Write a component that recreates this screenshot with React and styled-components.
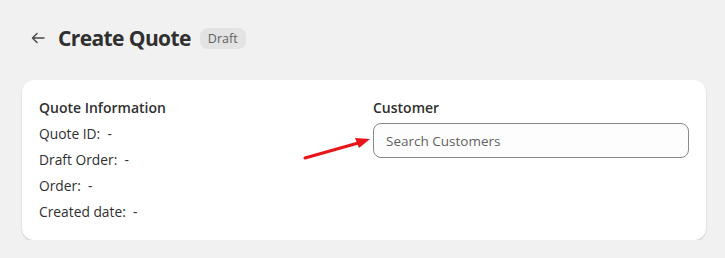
import React from 'react';
import styled, { createGlobalStyle } from 'styled-components';

const GlobalStyle = createGlobalStyle`
    body {
        margin: 0;
        background: #f1f1f1;
        font-family: "Open Sans", "Noto Sans", sans-serif;
        color: #303030;
    }
`;

const Page = styled.div`
    position: relative;
    padding: 24px 19px 0 22px;
`;

const Header = styled.div`
    display: flex;
    align-items: center;
    height: 28px;
    padding-left: 7px;
    margin-bottom: 28px;
`;

const BackButton = styled.button`
    display: flex;
    align-items: center;
    justify-content: center;
    width: 18px;
    height: 18px;
    padding: 0;
    margin-right: 11px;
    border: none;
    background: none;
    color: #4a4a4a;
    cursor: pointer;
`;

const Title = styled.h1`
    margin: 0 9px 0 0;
    font-size: 21px;
    font-weight: 700;
    letter-spacing: -0.6px;
    color: #303030;
`;

const Badge = styled.span`
    display: inline-flex;
    align-items: center;
    height: 21px;
    padding: 0 8px;
    border-radius: 8px;
    background: #e3e3e3;
    color: #616161;
    font-size: 12.5px;
`;

const Card = styled.div`
    display: grid;
    grid-template-columns: 1fr 1fr;
    gap: 18px;
    padding: 18px 17px 15px;
    background: #fff;
    border-radius: 12px;
    box-shadow: 0 1px 2px rgba(0, 0, 0, 0.18);
`;

const Column = styled.div`
    display: flex;
    flex-direction: column;
`;

const SectionTitle = styled.h2`
    margin: 0 0 ${(p) => p.$gap}px;
    font-size: 14px;
    line-height: 20px;
    font-weight: 600;
    color: #303030;
`;

const InfoRow = styled.div`
    font-size: 13.8px;
    line-height: 26px;
    color: #303030;
    white-space: pre;
`;

const SearchInput = styled.input`
    box-sizing: border-box;
    width: 100%;
    height: 35px;
    padding: 0 12px;
    border: 1px solid #8a8a8a;
    border-radius: 8px;
    background: #fdfdfd;
    font-family: inherit;
    font-size: 13.5px;
    color: #303030;
    outline: none;

    &::placeholder {
        color: #616161;
    }
`;

const Pointer = styled.svg`
    position: absolute;
    left: 300px;
    top: 131px;
    pointer-events: none;
`;

const info = [
    ['Quote ID:', '-'],
    ['Draft Order:', '-'],
    ['Order:', '-'],
    ['Created date:', '-'],
];

const App = () => {
    return (
        <>
            <GlobalStyle />
            <Page>
                <Header>
                    <BackButton aria-label="Back">
                        <svg width="16" height="16" viewBox="0 0 16 16" fill="none">
                            <path d="M14 8H2.5M7 3.5L2.5 8L7 12.5" stroke="currentColor" strokeWidth="1.5" strokeLinecap="round" strokeLinejoin="round" />
                        </svg>
                    </BackButton>
                    <Title>Create Quote</Title>
                    <Badge>Draft</Badge>
                </Header>
                <Card>
                    <Column>
                        <SectionTitle $gap={3}>Quote Information</SectionTitle>
                        {info.map(([label, value]) => (
                            <InfoRow key={label}>{label}  {value}</InfoRow>
                        ))}
                    </Column>
                    <Column>
                        <SectionTitle $gap={5}>Customer</SectionTitle>
                        <SearchInput placeholder="Search Customers" />
                    </Column>
                </Card>
                <Pointer width="75" height="32" viewBox="0 0 75 32">
                    <line x1="5" y1="27" x2="60" y2="11.5" stroke="#e8141a" strokeWidth="3" strokeLinecap="round" />
                    <polygon points="70,8 55,7 59,17" fill="#e8141a" />
                </Pointer>
            </Page>
        </>
    );
};

export default App;
